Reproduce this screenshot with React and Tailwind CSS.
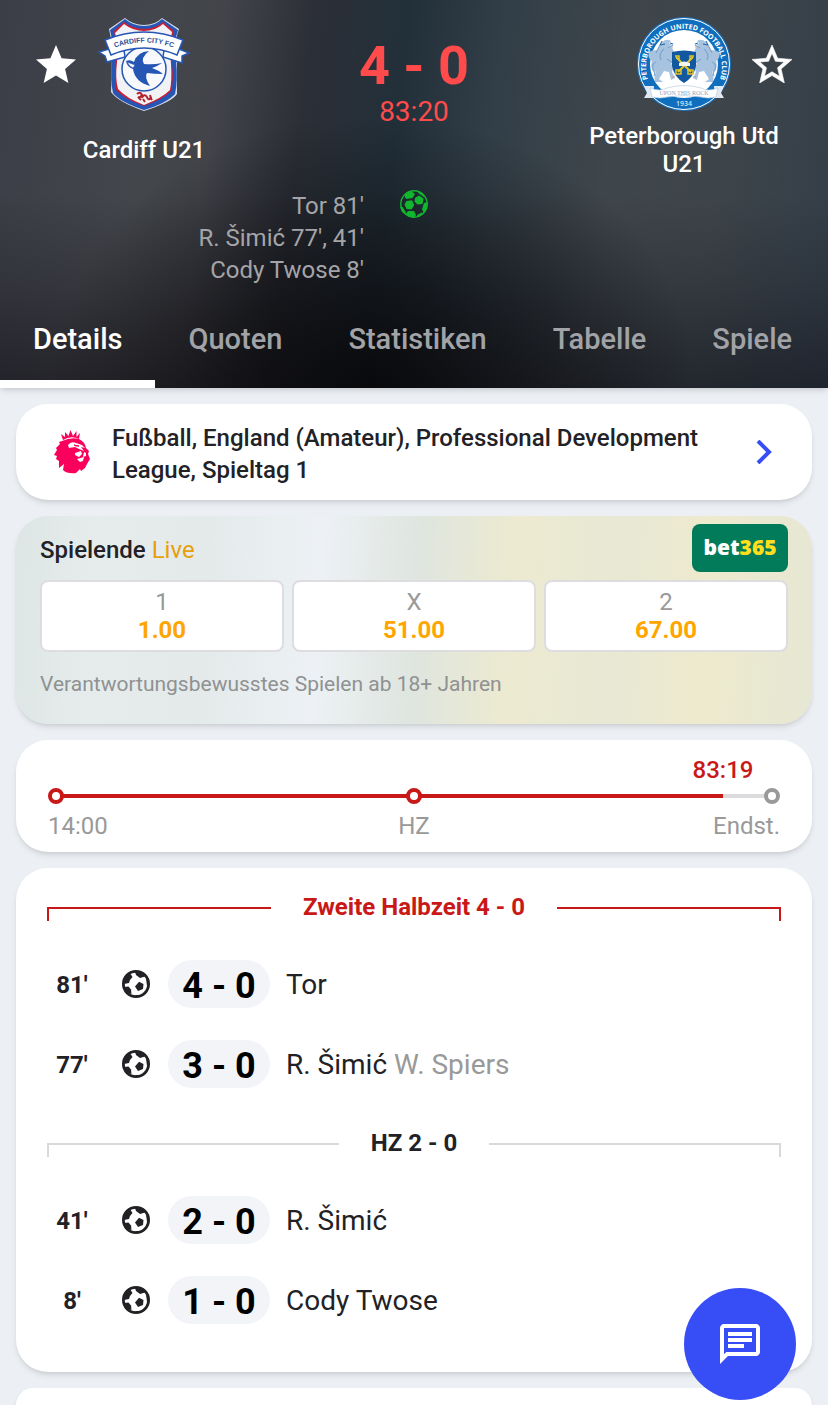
import { useId } from 'react';

const tabs = ['Details', 'Quoten', 'Statistiken', 'Tabelle', 'Spiele'];

const odds = [
  { label: '1', value: '1.00' },
  { label: 'X', value: '51.00' },
  { label: '2', value: '67.00' },
];

const halves = [
  {
    title: 'Zweite Halbzeit 4 - 0',
    live: true,
    events: [
      { minute: "81'", score: '4 - 0', player: 'Tor' },
      { minute: "77'", score: '3 - 0', player: 'R. Šimić', assist: 'W. Spiers' },
    ],
  },
  {
    title: 'HZ 2 - 0',
    live: false,
    events: [
      { minute: "41'", score: '2 - 0', player: 'R. Šimić' },
      { minute: "8'", score: '1 - 0', player: 'Cody Twose' },
    ],
  },
];

const CardiffCrest = () => {
  const arc = useId();
  return (
    <svg viewBox="0 0 96 96" className="h-24 w-24" role="img" aria-label="Cardiff">
      <path d="M29 2 Q37 9 48 9 Q59 9 66 2 L83 13 Q79 22 81 36 L81 78 Q76 86 48 95 Q22 86 15 76 L16 36 Q16 24 13 13 Z" fill="#d5dcec" />
      <path d="M29 3 Q37 10 48 10 Q59 10 66 3 L82 14 Q78 24 80 44 Q82 65 79 78 Q71 87 48 94 Q24 86 17 77 Q14 65 16 44 Q17 24 14 14 Z" fill="#2656b4" />
      <path d="M28 6 Q37 13 48 13 Q59 13 67 6 L78 15 Q74 30 76 48 Q78 65 75 75 Q68 83 48 90 Q28 83 20 74 Q18 62 20 46 Q21 28 18 15 Z" fill="#c91f35" />
      <path d="M28 8 Q37 15 48 15 Q59 15 67 8 L76 16 Q73 30 75 48 Q76 64 74 74 Q66 82 48 89 Q30 82 22 73 Q19 62 21 46 Q23 28 19 17 Z" fill="#f1f2f6" />
      <path d="M13 33 L3 36 L9 40 L11 46 L29 41 L28 34 Z M83 33 L93 37 L86 40 L86 47 L67 41 L68 34 Z" fill="#fff" stroke="#2656b4" strokeWidth="1.500" />
      <circle cx="48" cy="53" r="22" fill="#f8f9fc" stroke="#2656b4" strokeWidth="1.500" />
      <path d="M30 45 Q34 43 38 46 Q41 36 53 35 Q44 42 48 48 Q57 49 66 47 Q60 51 56 52 Q62 54 67 58 Q58 58 51 57 Q48 61 54 70 Q39 66 37 53 Q31 51 30 45 Z" fill="#2656b4" />
      <path d="M31 46 Q33 50 37 52 L39 49 Z" fill="#fff" stroke="#2656b4" strokeWidth=".6" />
      <path d="M9 24 Q48 8 87 24 L81 39 Q48 25 15 39 Z" fill="#fff" stroke="#2656b4" strokeWidth="1.600" />
      <path id={arc} d="M10 35 Q48 18 86 35" fill="none" />
      <text className="font-['Liberation_Sans'] text-[7px] font-bold" fill="#2f4f96" textAnchor="middle">
        <textPath href={`#${arc}`} startOffset="50%">
          CARDIFF CITY FC
        </textPath>
      </text>
      <path d="M41 78 q3 -3 5 1 q-2 3 -4 2 l3 3 M46 82 q2 -5 5 -1 q1 4 4 1 l-1 -3 M47 83 l2 3 M54 81 l2 3" fill="none" stroke="#b3222b" strokeWidth="2" />
    </svg>
  );
};

const Griffin = () => (
  <g>
    <path
      d="M26 26 q5 -4 9 -1 l-2 2 3 2 -3 1 q5 2 5 8 l2 5 q-3 2 -5 5 l3 2 -2 6 3 6 -4 2 -2 -8 -5 -1 -5 8 4 3 -8 0 q-1 -6 1 -10 q-7 -4 -4 -11 q-5 -3 -3 -9 q4 -2 8 -2 z"
      fill="#a8c3df"
    />
    <path d="M24 29 l-4 8 M28 33 q-6 5 -3 11 M32 32 l5 -3 M31 43 l6 4 M20 46 q-5 2 -3 8 q3 3 1 6" fill="none" stroke="#7fa7ce" strokeWidth="1.300" />
    <path d="M26 25 l-2 4 5 -1 M34 27 l3 1" fill="none" stroke="#1e65a8" strokeWidth="1" />
    <path d="M35 31 l2 0 M38 50 l2 -1 M36 61 l3 0" stroke="#d29a9a" strokeWidth="1" />
  </g>
);

const PeterboroughCrest = () => {
  const ring = useId();
  return (
    <svg viewBox="0 0 96 96" className="h-24 w-24" role="img" aria-label="Peterborough Utd">
      <circle cx="48" cy="48" r="47" fill="#1c6fb9" />
      <circle cx="48" cy="48" r="45.500" fill="#0f6fbe" stroke="#fff" strokeWidth="1" />
      <circle cx="48" cy="48" r="34" fill="#fff" />
      <Griffin />
      <g transform="matrix(-1 0 0 1 96 0)">
        <Griffin />
      </g>
      <path d="M36 36 Q48 33 60 36 L60 50 Q58 61 48 67 Q38 61 36 50 Z" fill="#12589e" />
      <path d="M40 41 L55 56 M57 41 L42 56" stroke="#e3c52a" strokeWidth="2" />
      <path d="M39 40 h4 v4 M58 40 h-4 v4 M40 54 h5 v4 h-5 z M52 54 h5 v4 h-5 z" fill="none" stroke="#e3c52a" strokeWidth="1.500" />
      <path d="M43 47 q5 -3 11 0 v3 h-11 z" fill="#f4f4ef" />
      <path id={ring} d="M12 63 A38 38 0 1 1 84 63" fill="none" />
      <text className="font-['Open_Sans'] text-[7px] font-bold" fill="#fff" textAnchor="middle">
        <textPath href={`#${ring}`} startOffset="50%">PETERBOROUGH UNITED FOOTBALL CLUB</textPath>
      </text>
      <path d="M8 70 h10 l-1 12 h-9 l3 -5 z M88 70 h-10 l1 12 h9 l-3 -5 z" fill="#e1e9f2" />
      <path d="M14 72 Q24 76 31 72 Q48 67 65 72 Q72 76 82 72 L80 81 Q72 83 65 81 Q48 78 31 81 Q24 83 16 81 Z" fill="#fff" stroke="#b9cbdd" strokeWidth=".7" />
      <text x="48" y="79" className="font-['Liberation_Serif'] text-[6px]" fill="#8da7c2" textAnchor="middle">UPON THIS ROCK</text>
      <text x="48" y="90" className="font-['Open_Sans'] text-[7px] font-semibold" fill="#cfe2f4" textAnchor="middle">1934</text>
    </svg>
  );
};

const Star = ({ filled }) => (
  <svg viewBox="2 2 20 19" className="h-[38px] w-10 text-white">
    {filled ? (
      <path fill="currentColor" d="M12 17.270 18.180 21l-1.640-7.030L22 9.240l-7.190-.61L12 2 9.190 8.630 2 9.240l5.460 4.730L5.820 21z" />
    ) : (
      <path
        fill="currentColor"
        stroke="currentColor"
        strokeWidth=".3"
        d="M22 9.240l-7.190-.62L12 2 9.190 8.630 2 9.240l5.460 4.730L5.820 21 12 17.270 18.180 21l-1.630-7.030L22 9.240zM12 15.400l-3.760 2.270 1-4.280-3.320-2.880 4.380-.38L12 6.100l1.710 4.040 4.380.38-3.320 2.880 1 4.280L12 15.400z"
      />
    )}
  </svg>
);

const GoalBall = () => (
  <svg viewBox="0 0 28 28" className="h-7 w-7 text-[#11b62f]" role="img" aria-label="Tore">
    <circle cx="14" cy="14" r="13.200" fill="none" stroke="currentColor" strokeWidth="1.400" />
    <g fill="currentColor">
      <path d="M6.500 11 L12 10.300 L14.200 15 L11.500 19.500 L6.500 19 L4.500 14.500 Z" />
      <path d="M15 8 L19 5.500 L23.500 8.500 L22.500 14 L17.500 14.500 L14.500 11.500 Z" />
      <path d="M5 3.500 L11 .8 L15 4 L12.500 8 L6.500 9 L5 7.500 Z" />
      <path d="M24 13 L27.800 12 L27 19 L24 23 L22 19.500 Z" />
      <path d="M8 21 L14 21 L16 25 L14 28 L8 26.500 L6 23.500 Z" />
      <path d="M0 17 L2.500 17 L5.500 21.500 L5.500 24.500 L2 22 Z" />
      <path d="M17 25 L22 22.500 L23.500 23.500 L18 27.500 Z M17 .8 L23 3.500 L26 7.500 L24 7 L19 3.500 Z" />
    </g>
  </svg>
);

const EventBall = () => (
  <svg viewBox="0 0 28 28" className="h-7 w-7 text-[#222226]" role="img" aria-label="Tor">
    <circle cx="14" cy="14" r="12.600" fill="none" stroke="currentColor" strokeWidth="2.800" />
    <g fill="currentColor">
      <path d="M17 11.800 L21.500 14 L21 19 L16 21 L13 16.500 Z" />
      <path d="M13 2 H21 L23 6.500 L18 8 L14 5 Z" />
      <path d="M2 7 L8 3 L10.500 7 L8 10 L7 13 L2 14 Z" />
      <path d="M2 17 L6.500 16.500 L9 19.500 L9.500 24 L4 23 Z" />
      <path d="M24 8 L27 13 V18 L25 16 Z M13 25 H19 L16 27 Z" />
    </g>
  </svg>
);

const LionLogo = () => (
  <svg viewBox="0 0 36 44" className="h-11 w-9 shrink-0" role="img" aria-label="Professional Development League">
    <path d="M7 4 L11 7 L11 2 L14.500 6 L16.500 0 L19 6 L22.500 1 L22.500 7 L26 3 L25 9 Q17 5 9 10 Z" fill="#f8005c" />
    <path
      d="M8 11 Q17 7 25 9 Q31 12 32 18 L35 21 L34 24 L36 29 L33 34 L31 38 L27 41 L26 39 L22 43 Q13 44 9 40 L10 34 L5 38 L5 31 L2 29 L3 26 L0 25 L3 20 L2 18 L6 14 L5 12 Z"
      fill="#f8005c"
    />
    <path d="M14 15 Q17 11 22 13 L28 15 L31 18 L27 17 L30 21 L25 19 L21 17 L15 18 Z M21 23 L27 21 L28 24 L25 27 L21 25 Z M30 22 L32 23 L32 26 L29 27 Z M23 29 L30 27 L29 31 L26 32 Z" fill="#fff" />
    <path d="M20 15 L25 16 L22 16 Z" fill="#f8005c" stroke="#f8005c" />
  </svg>
);

const Team = ({ name, crest, favourite, reverse }) => (
  <div className="w-[216px] shrink-0">
    <div className={`flex items-center gap-5 ${reverse ? 'flex-row-reverse' : ''}`}>
      <button type="button" aria-label={`${name} Favorit`} aria-pressed={favourite}>
        <Star filled={favourite} />
      </button>
      {crest}
    </div>
    <h2 className="mt-2 flex h-15 items-center justify-center text-center text-2xl leading-7 font-medium">{name}</h2>
  </div>
);

const Header = () => (
  <header className="relative z-10 bg-[linear-gradient(97deg,#3b3e47_0%,#43464b_18%,#42444a_26%,#2c2f37_36%,#22303a_47%,#333f48_58%,#43494d_72%,#454a4d_84%,#3c444c_100%)] text-white shadow-md">
    <div className="bg-[radial-gradient(ellipse_at_45%_100%,rgba(8,8,10,0.9)_0%,rgba(8,8,10,0.45)_25%,transparent_50%),linear-gradient(90deg,transparent_50%,rgba(20,40,60,0.2)_100%),linear-gradient(180deg,transparent_50%,rgba(16,12,18,0.25)_75%,rgba(16,14,20,0.6)_100%)]">
      <div className="flex justify-between px-9 pt-4">
        <Team name="Cardiff U21" crest={<CardiffCrest />} favourite />
        <div className="pt-5 text-center text-[#ff4b4b]">
          <p className="text-[54px] leading-15 font-bold">4 - 0</p>
          <p className="text-[28px] leading-8">83:20</p>
        </div>
        <Team name="Peterborough Utd U21" crest={<PeterboroughCrest />} favourite={false} reverse />
      </div>
      <div className="mt-2.5 grid grid-cols-[1fr_auto_1fr] gap-x-9">
        <ul className="text-right text-2xl leading-8 text-[#a5a5a8]">
          <li>Tor 81'</li>
          <li>R. Šimić 77', 41'</li>
          <li>Cody Twose 8'</li>
        </ul>
        <GoalBall />
      </div>
      <nav className="mt-1.5 flex">
        {tabs.map((tab, i) => (
          <a
            key={tab}
            href="#"
            className={`flex h-24 shrink-0 items-center border-b-8 px-[33px] pt-2 text-[29px] font-medium ${
              i === 0 ? 'border-white text-white' : 'border-transparent text-[#a1a3a7]'
            }`}
          >
            {tab}
          </a>
        ))}
      </nav>
    </div>
  </header>
);

const Odds = () => (
  <section className="rounded-[32px] bg-[linear-gradient(93deg,#dde6e4_0%,#e6ecec_10%,#e4eaea_24%,#edf1f5_38%,#dfe5df_50%,#ecead0_62%,#e8e8d4_75%,#edeacd_86%,#e6e7d4_100%)] px-6 pt-2 pb-5 shadow-md">
    <div className="flex h-12 items-center justify-between">
      <h3 className="pt-1 text-2xl font-medium">
        Spielende <span className="font-normal text-[#e79f0a]">Live</span>
      </h3>
      <a href="#" className="flex h-12 w-24 items-center justify-center rounded-lg bg-[#027b5b] font-['Open_Sans'] text-[21px] font-extrabold text-white">
        bet<span className="text-[#ffdf1b]">365</span>
      </a>
    </div>
    <div className="mt-2 grid grid-cols-3 gap-2">
      {odds.map((odd) => (
        <button key={odd.label} type="button" className="h-[72px] rounded-lg border-2 border-[#dddde0] bg-white text-2xl leading-7">
          <span className="block text-[#999]">{odd.label}</span>
          <span className="block font-bold text-[#ffa500]">{odd.value}</span>
        </button>
      ))}
    </div>
    <p className="mt-4 mb-1 text-[21px] leading-8 text-[#8f9192]">Verantwortungsbewusstes Spielen ab 18+ Jahren</p>
  </section>
);

const Dot = ({ done }) => <span className={`h-4 w-4 rounded-full border-4 bg-white ${done ? 'border-[#c91818]' : 'border-[#999]'}`} />;

const Timeline = () => {
  const progress = (83.8 / 90) * 100;
  return (
    <section className="rounded-[32px] bg-white px-8 pt-4 pb-2.5 text-2xl shadow-md">
      <div className="mx-2 h-7">
        <p className="text-right leading-7 font-medium text-[#c91818]" style={{ width: `${progress + 4.3}%` }}>
          83:19
        </p>
      </div>
      <div className="relative mt-1 flex h-4 items-center justify-between">
        <div className="absolute inset-x-2 h-1 bg-[#dcdcde]">
          <div className="h-full bg-[#c91818]" style={{ width: `${progress}%` }} />
        </div>
        <span className="relative flex w-full justify-between">
          <Dot done />
          <Dot done />
          <Dot />
        </span>
      </div>
      <div className="mt-1.5 grid grid-cols-3 leading-8 text-[#999]">
        <span>14:00</span>
        <span className="text-center">HZ</span>
        <span className="text-right">Endst.</span>
      </div>
    </section>
  );
};

const HalfTitle = ({ title, live }) => {
  const line = live ? 'border-[#c91818]' : 'border-[#d9d9dc]';
  return (
    <div className="-mx-px flex h-[76px] items-center gap-8 pt-0.5">
      <span className={`mt-3.5 h-3.5 flex-1 border-t-2 border-l-2 ${line}`} />
      <h3 className={`text-2xl font-bold ${live ? 'text-[#c91818]' : 'text-[#222226]'}`}>{title}</h3>
      <span className={`mt-3.5 h-3.5 flex-1 border-t-2 border-r-2 ${line}`} />
    </div>
  );
};

const MatchEvent = ({ event }) => (
  <li className="flex h-20 items-center">
    <span className="w-12 pt-0.5 text-center text-2xl font-bold">{event.minute}</span>
    <span className="ml-[26px]">
      <EventBall />
    </span>
    <span className="ml-[18px] flex h-12 w-[102px] items-center justify-center rounded-full bg-[#f2f4f8] pt-1 text-4xl font-bold text-black">
      {event.score}
    </span>
    <span className="ml-4 pt-0.5 text-[28px]">
      {event.player} {event.assist && <span className="text-[#999]">{event.assist}</span>}
    </span>
  </li>
);

const App = () => {
  return (
    <div className="flex min-h-screen flex-col bg-[#ecf0f5] font-['Roboto',sans-serif] text-[#222226]">
      <Header />

      <main className="flex flex-1 flex-col gap-4 px-4 pt-4">
        <a href="#" className="flex items-center rounded-[32px] bg-white py-3.5 pr-9 pl-[38px] shadow-md">
          <LionLogo />
          <span className="ml-[22px] flex-1 pt-1 text-2xl leading-8 font-medium">
            Fußball, England (Amateur), Professional Development League, Spieltag 1
          </span>
          <svg viewBox="0 0 24 24" className="h-6 w-6 text-[#374df5]" fill="none" stroke="currentColor" strokeWidth="4">
            <path d="M6 1 L17 12 L6 23" />
          </svg>
        </a>

        <Odds />
        <Timeline />

        <section className="rounded-[32px] bg-white px-8 pb-8 shadow-md">
          {halves.map((half) => (
            <div key={half.title}>
              <HalfTitle title={half.title} live={half.live} />
              <ul>
                {half.events.map((event) => (
                  <MatchEvent key={event.minute} event={event} />
                ))}
              </ul>
            </div>
          ))}
        </section>

        <section className="min-h-4 flex-1 rounded-t-[32px] bg-white shadow-md" />
      </main>

      <button
        type="button"
        aria-label="Chat"
        className="fixed right-8 bottom-[5px] z-20 flex h-28 w-28 items-center justify-center rounded-full bg-[#374df5] text-white"
      >
        <svg viewBox="2 2 20 20" className="h-10 w-10" fill="currentColor">
          <path d="M4 4h16v12H5.170L4 17.170V4m0-2c-1.100 0-1.990.9-1.990 2L2 22l4-4h14c1.100 0 2-.9 2-2V4c0-1.100-.9-2-2-2H4zm2 10h8v2H6v-2zm0-3h12v2H6V9zm0-3h12v2H6V6z" />
        </svg>
      </button>
    </div>
  );
};

export default App;
